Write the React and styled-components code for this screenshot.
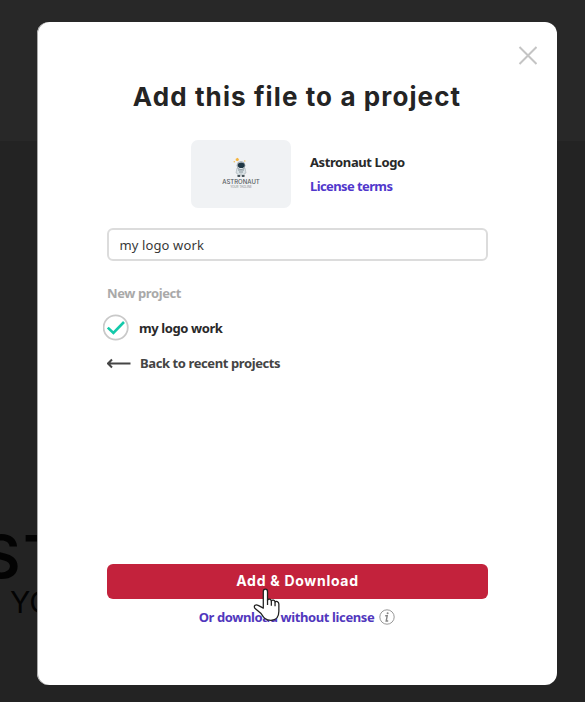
import React from "react";
import styled, { createGlobalStyle } from "styled-components";

const GlobalStyle = createGlobalStyle`
  * { box-sizing: border-box; }
  body { margin: 0; background: #232323; }
  button { border: 0; padding: 0; background: none; }
`;

const Page = styled.main`
  position: relative;
  height: 702px;
  overflow: hidden;
  padding: 22px 28px 0 37px;
  background: linear-gradient(#282828 0 141px, #232323 141px);
  font-family: "Noto Sans", "Open Sans", sans-serif;
`;

const Backdrop = styled.div`
  position: absolute;
  left: -18px;
  top: 519px;
  color: #030303;
  font-family: Inter, sans-serif;
  white-space: nowrap;
`;

const BackdropName = styled.div`
  font-size: 59px;
  line-height: 76px;
  font-weight: 600;
  letter-spacing: 3px;
`;

const BackdropTagline = styled.div`
  padding-left: 28px;
  margin-top: -11px;
  font-size: 30px;
  line-height: 36px;
`;

const Dialog = styled.section`
  position: relative;
  display: flex;
  flex-direction: column;
  height: 663px;
  padding: 0 70px;
  border-radius: 12px;
  background: #fff;
  box-shadow: inset 1px 0 #aaa;
`;

const Header = styled.header`
  display: flex;
  justify-content: flex-end;
  height: 56px;
  margin-right: -50px;
  padding-top: 24px;
`;

const CloseButton = styled.button`
  width: 19px;
  height: 19px;
  svg { display: block; }
`;

const Title = styled.h1`
  margin: 0 -20px;
  color: #242424;
  font: 700 26px/38px Inter, sans-serif;
  letter-spacing: 1.1px;
  text-align: center;
  white-space: nowrap;
`;

const FileSummary = styled.div`
  display: flex;
  align-items: center;
  gap: 19px;
  height: 68px;
  margin: 24px 0 20px;
  padding-left: 84px;
`;

const Thumbnail = styled.div`
  display: flex;
  flex-direction: column;
  align-items: center;
  width: 100px;
  height: 68px;
  padding-top: 17px;
  border-radius: 7px;
  background: #f0f2f4;
  color: #555b60;
  text-align: center;
  white-space: nowrap;
`;

const ThumbName = styled.div`
  font: 500 6px/7px Inter, sans-serif;
`;

const ThumbTagline = styled.div`
  font: 3px/4px Inter, sans-serif;
  color: #85898c;
`;

const FileInfo = styled.div`
  display: flex;
  flex-direction: column;
  gap: 6px;
`;

const Label = styled.span`
  color: ${(p) => p.$color || "#292929"};
  font-size: 13px;
  line-height: 18px;
  font-weight: 700;
  letter-spacing: ${(p) => p.$tracking || "-0.4px"};
  white-space: nowrap;
`;

const ProjectInput = styled.input`
  width: 381px;
  height: 33px;
  padding: 0 10.5px;
  border: 2px solid #dcdcdc;
  border-radius: 6px;
  outline: 0;
  background: #fff;
  color: #383838;
  font: 400 13px "Noto Sans", sans-serif;
  letter-spacing: 0.12px;
`;

const ProjectList = styled.div`
  display: flex;
  flex-direction: column;
  align-items: flex-start;
  padding-top: 23px;
`;

const ProjectOption = styled.div`
  display: flex;
  align-items: center;
  gap: 9px;
  height: 28px;
  margin: 12px 0 12px -4px;
`;

const BackButton = styled.button`
  display: flex;
  align-items: center;
  gap: 9px;
  height: 18px;
  font-family: inherit;
`;

const Actions = styled.footer`
  margin-top: auto;
  padding-bottom: 59px;
`;

const DownloadButton = styled.button`
  display: block;
  width: 381px;
  height: 35px;
  border-radius: 6px;
  background: #c3223c;
  color: #fff;
  font: 700 14px/33px Inter, sans-serif;
  letter-spacing: 0.72px;
  padding-bottom: 2px;
`;

const AlternateLink = styled.div`
  display: flex;
  justify-content: center;
  align-items: center;
  gap: 5px;
  height: 18px;
  margin-top: 9px;
`;

const Pointer = styled.svg`
  position: absolute;
  left: 215px;
  top: 565px;
  width: 30px;
  height: 36px;
`;

function Astronaut() {
  return (
    <svg width="18" height="21" viewBox="0 0 18 21">
      <path d="M3.8 1.8 5.8.8 7.2 3 5.2 4.2 3.6 3.2Z" fill="#f5b53f" />
      <circle cx="2.3" cy="4.8" r=".8" fill="#f5bd4f" />
      <circle cx="12.8" cy="4" r=".7" fill="#f5bd4f" />
      <path d="M5 11h8l1 5-2 1v2h-2v-2H8v2H6v-2l-2-1Z" fill="#d9e2e6" stroke="#9aa4a9" strokeWidth=".5" />
      <circle cx="9" cy="8.5" r="4" fill="#edf2f4" stroke="#788389" strokeWidth=".6" />
      <ellipse cx="9.2" cy="8.2" rx="3.5" ry="2.8" fill="#203744" />
      <path d="M6 13h6M7 15h4" stroke="#77858c" strokeWidth=".8" />
      <path d="M5.5 19h2.7M9.8 19h2.7" stroke="#1e2c34" strokeWidth="1.5" />
    </svg>
  );
}

function CheckMark() {
  return (
    <svg width="27" height="28" viewBox="0 0 27 28" fill="none">
      <circle cx="12.7" cy="13.5" r="12.1" stroke="#c9c9c9" strokeWidth="1.8" />
      <path d="m4.8 13.6 5.6 5.4L21 8" stroke="#13c9aa" strokeWidth="2.6" />
    </svg>
  );
}

export default function App() {
  return (
    <>
      <GlobalStyle />
      <Page>
        <Backdrop aria-hidden="true">
          <BackdropName>ST</BackdropName>
          <BackdropTagline>YO</BackdropTagline>
        </Backdrop>
        <Dialog role="dialog" aria-labelledby="dialog-title">
          <Header>
            <CloseButton aria-label="Close">
              <svg width="19" height="19" viewBox="0 0 19 19">
                <path d="m1.5 1 17 17M18.5 1l-17 17" stroke="#c4c4c4" strokeWidth="2" />
              </svg>
            </CloseButton>
          </Header>
          <Title id="dialog-title">Add this file to a project</Title>
          <FileSummary>
            <Thumbnail>
              <Astronaut />
              <ThumbName>ASTRONAUT</ThumbName>
              <ThumbTagline>YOUR TAGLINE</ThumbTagline>
            </Thumbnail>
            <FileInfo>
              <Label>Astronaut Logo</Label>
              <Label $color="#5137cc" $tracking="-0.6px">License terms</Label>
            </FileInfo>
          </FileSummary>
          <ProjectInput aria-label="Project name" defaultValue="my logo work" />
          <ProjectList>
            <Label $color="#a9a9a9">New project</Label>
            <ProjectOption>
              <CheckMark />
              <Label>my logo work</Label>
            </ProjectOption>
            <BackButton>
              <svg width="24" height="12" viewBox="0 0 24 12" fill="none">
                <path d="M23.5 6.5H1M5 2.5l-4 4 4 4" stroke="#454545" strokeWidth="2" />
              </svg>
              <Label $color="#444">Back to recent projects</Label>
            </BackButton>
          </ProjectList>
          <Actions>
            <DownloadButton>Add &amp; Download</DownloadButton>
            <AlternateLink>
              <Label $color="#5137bd" $tracking="-0.39px">Or download without license</Label>
              <svg width="16" height="16" viewBox="0 0 16 16" fill="none">
                <circle cx="8" cy="8" r="7.2" stroke="#999" strokeWidth="1" />
                <path d="M6.2 6.8h2L7.2 12h2" stroke="#858585" strokeWidth="1.4" />
                <circle cx="8.6" cy="4.2" r="1" fill="#858585" />
              </svg>
            </AlternateLink>
          </Actions>
          <Pointer viewBox="0 0 28 34">
            <path
              d="M10.5 20V4.4c0-3.2 4-3.2 4 0v8c.7-1.5 3.3-1.2 3.6.7.9-1.2 3.2-.8 3.5 1 1-1 3.6-.5 3.6 2V23c0 5-2.2 8.5-7.5 8.5-5.7 0-7.1-3-9.3-6.4L2.5 20c-1.4-2.3 1-4 3.2-2.6Z"
              fill="#fff" stroke="#202020" strokeWidth="1.2" strokeLinejoin="round"
            />
            <path d="M14.5 12v5M18.1 13v4.6M21.6 14.2v4" stroke="#202020" strokeWidth="1.2" />
          </Pointer>
        </Dialog>
      </Page>
    </>
  );
}
